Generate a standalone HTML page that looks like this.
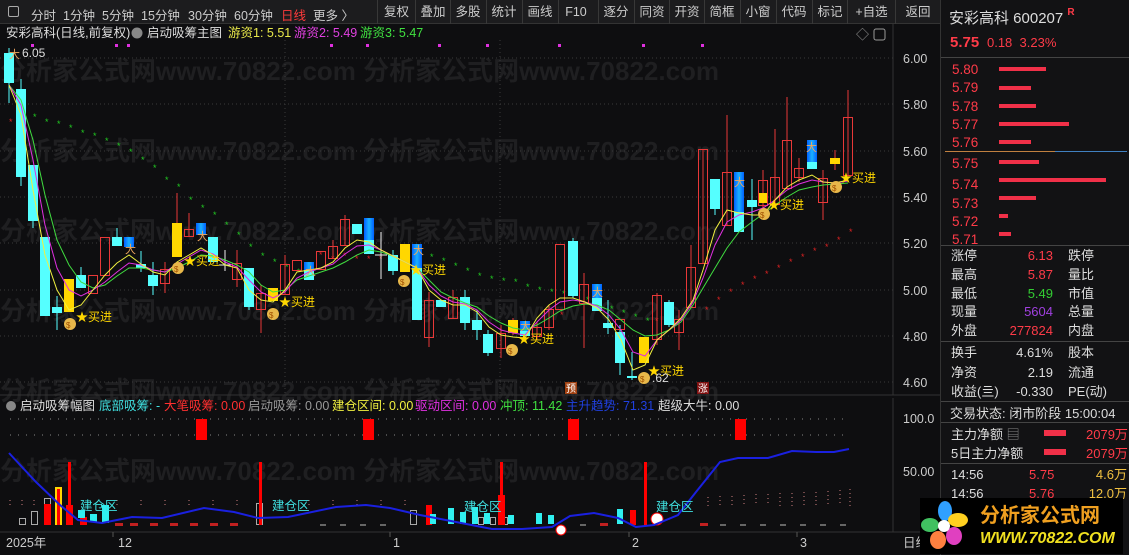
<!DOCTYPE html>
<html><head><meta charset="utf-8">
<style>
*{margin:0;padding:0;box-sizing:border-box}
body{width:1129px;height:555px;background:#0e0e10;overflow:hidden;font-family:"Liberation Sans","Noto Sans CJK SC",sans-serif;position:relative;color:#ddd}
.tb{position:absolute;left:0;top:0;width:940px;height:24px;background:#1c1c1e;border-bottom:1px solid #333;font-size:12.5px}
.tb span{position:absolute;top:5px;color:#ccc}
.tb .bt{top:0;height:24px;line-height:24px;border-left:1px solid #383838;text-align:center;width:35px}
.rp{position:absolute;left:940px;top:0;width:189px;height:555px;background:#121214;border-left:1px solid #333;font-size:13px}
.rp div{position:absolute;white-space:nowrap}
.r{color:#ff3b48}.w{color:#ddd}
</style></head><body>
<div class="tb">
<span style="left:8px;top:6px;width:11px;height:11px;border:1px solid #aaa;border-radius:2px"></span>
<span style="left:31px">分时</span><span style="left:63px">1分钟</span><span style="left:102px">5分钟</span><span style="left:141px">15分钟</span><span style="left:188px">30分钟</span><span style="left:234px">60分钟</span><span style="left:281px;color:#ff3b3b">日线</span><span style="left:313px">更多 〉</span>
<span class="bt" style="left:377px;width:38px">复权</span><span class="bt" style="left:415px">叠加</span><span class="bt" style="left:450px">多股</span><span class="bt" style="left:486px">统计</span><span class="bt" style="left:522px">画线</span><span class="bt" style="left:558px">F10</span><span class="bt" style="left:598px">逐分</span><span class="bt" style="left:634px">同资</span><span class="bt" style="left:669px">开资</span><span class="bt" style="left:704px">简框</span><span class="bt" style="left:740px">小窗</span><span class="bt" style="left:776px">代码</span><span class="bt" style="left:812px">标记</span><span class="bt" style="left:847px;width:48px">+自选</span><span class="bt" style="left:895px;width:45px">返回</span>
</div>
<svg width="940" height="555" style="position:absolute;left:0;top:0" font-family="Liberation Sans, Noto Sans CJK SC, sans-serif">
<g fill="#1f1f21" font-size="26" font-weight="bold">
<text x="0" y="80">分析家公式网www.70822.com   分析家公式网www.70822.com</text>
<text x="0" y="160">分析家公式网www.70822.com   分析家公式网www.70822.com</text>
<text x="0" y="240">分析家公式网www.70822.com   分析家公式网www.70822.com</text>
<text x="0" y="320">分析家公式网www.70822.com   分析家公式网www.70822.com</text>
<text x="0" y="400">分析家公式网www.70822.com   分析家公式网www.70822.com</text>
<text x="0" y="480">分析家公式网www.70822.com   分析家公式网www.70822.com</text>
</g>
<!-- header -->
<g font-size="12.5">
<text x="6" y="37" fill="#ddd">安彩高科(日线,前复权)</text>
<circle cx="137" cy="33" r="5.5" fill="#888"/>
<text x="147" y="37" fill="#ddd">启动吸筹主图</text>
<text x="228" y="37" fill="#e8e84a">游资1: 5.51</text>
<text x="294" y="37" fill="#e040e0">游资2: 5.49</text>
<text x="360" y="37" fill="#40e040">游资3: 5.47</text>
</g>
<text x="856" y="39" fill="#999" font-size="13">◇</text>
<rect x="874" y="29" width="11" height="11" fill="none" stroke="#999" rx="2"/>
<line x1="893" y1="24" x2="893" y2="395" stroke="#333"/>
<line x1="0" y1="395" x2="940" y2="395" stroke="#333"/>
<line x1="0" y1="532" x2="940" y2="532" stroke="#333"/>
<line x1="893" y1="398" x2="893" y2="532" stroke="#333"/>
<!-- grid -->
<g stroke="#3a3a3a" stroke-dasharray="1,3">
<line x1="0" y1="58" x2="893" y2="58"/><line x1="0" y1="104" x2="893" y2="104"/><line x1="0" y1="151" x2="893" y2="151"/><line x1="0" y1="197" x2="893" y2="197"/><line x1="0" y1="243" x2="893" y2="243"/><line x1="0" y1="290" x2="893" y2="290"/><line x1="0" y1="336" x2="893" y2="336"/><line x1="0" y1="382" x2="893" y2="382"/>
<line x1="285" y1="40" x2="285" y2="395"/><line x1="500" y1="40" x2="500" y2="395"/>
</g>
<g fill="#ccc" font-size="12.5">
<text x="903" y="63">6.00</text><text x="903" y="109">5.80</text><text x="903" y="156">5.60</text><text x="903" y="202">5.40</text><text x="903" y="248">5.20</text><text x="903" y="295">5.00</text><text x="903" y="341">4.80</text><text x="903" y="387">4.60</text>
<text x="903" y="423">100.0</text><text x="903" y="476">50.00</text>
</g>
<g fill="#e030e0"><rect x="31" y="44" width="3" height="3"/><rect x="115" y="44" width="3" height="3"/><rect x="127" y="44" width="3" height="3"/><rect x="330" y="44" width="3" height="3"/><rect x="366" y="44" width="3" height="3"/><rect x="438" y="44" width="3" height="3"/><rect x="486" y="44" width="3" height="3"/><rect x="558" y="44" width="3" height="3"/><rect x="642" y="44" width="3" height="3"/><rect x="701" y="44" width="3" height="3"/></g>
<g fill="#22cc22" font-size="9">
<text x="20" y="124">*</text><text x="33" y="120">*</text><text x="45" y="125">*</text><text x="57" y="127">*</text><text x="69" y="131">*</text><text x="81" y="136">*</text><text x="93" y="139">*</text><text x="105" y="144">*</text><text x="117" y="149">*</text><text x="129" y="155">*</text><text x="141" y="163">*</text><text x="153" y="171">*</text><text x="165" y="183">*</text><text x="177" y="190">*</text><text x="189" y="203">*</text><text x="201" y="211">*</text><text x="213" y="218">*</text><text x="225" y="228">*</text><text x="237" y="238">*</text><text x="249" y="250">*</text><text x="261" y="259">*</text><text x="273" y="265">*</text><text x="285" y="270">*</text><text x="297" y="275">*</text><text x="430" y="260">*</text><text x="442" y="264">*</text><text x="454" y="269">*</text><text x="466" y="274">*</text><text x="478" y="279">*</text><text x="490" y="282">*</text><text x="502" y="284">*</text><text x="514" y="285">*</text><text x="526" y="290">*</text><text x="538" y="293">*</text><text x="550" y="295">*</text><text x="562" y="297">*</text><text x="574" y="299">*</text><text x="586" y="303">*</text><text x="598" y="307">*</text><text x="610" y="312">*</text><text x="622" y="316">*</text><text x="634" y="320">*</text><text x="646" y="324">*</text><text x="668" y="322">*</text>
</g>
<g fill="#dd2222" font-size="9">
<text x="9" y="125">*</text><text x="319" y="258">*</text><text x="331" y="262">*</text><text x="343" y="259">*</text><text x="355" y="262">*</text><text x="367" y="262">*</text><text x="379" y="262">*</text><text x="560" y="318">*</text><text x="655" y="324">*</text><text x="705" y="313">*</text><text x="717" y="303">*</text><text x="729" y="295">*</text><text x="741" y="288">*</text><text x="753" y="282">*</text><text x="765" y="277">*</text><text x="777" y="271">*</text><text x="789" y="265">*</text><text x="801" y="260">*</text><text x="813" y="254">*</text><text x="825" y="250">*</text><text x="837" y="243">*</text><text x="849" y="235">*</text>
</g>
<g stroke-width="1">
<g stroke="#5ff"><line x1="9" y1="48" x2="9" y2="103"/><line x1="21" y1="79" x2="21" y2="186"/><line x1="33" y1="165" x2="33" y2="228"/><line x1="57" y1="296" x2="57" y2="330"/><line x1="81" y1="267" x2="81" y2="288"/><line x1="117" y1="228" x2="117" y2="246"/><line x1="141" y1="251" x2="141" y2="272"/><line x1="153" y1="262" x2="153" y2="295"/><line x1="249" y1="268" x2="249" y2="310"/><line x1="393" y1="250" x2="393" y2="275"/><line x1="465" y1="290" x2="465" y2="330"/><line x1="477" y1="310" x2="477" y2="340"/><line x1="488" y1="330" x2="488" y2="356"/><line x1="573" y1="238" x2="573" y2="298"/><line x1="608" y1="300" x2="608" y2="334"/><line x1="620" y1="325" x2="620" y2="375"/><line x1="632" y1="352" x2="632" y2="380"/><line x1="669" y1="300" x2="669" y2="327"/><line x1="715" y1="179" x2="715" y2="215"/><line x1="752" y1="179" x2="752" y2="240"/></g>
<g stroke="#e83838"><line x1="165" y1="262" x2="165" y2="293"/><line x1="177" y1="193" x2="177" y2="257"/><line x1="189" y1="213" x2="189" y2="236"/><line x1="237" y1="250" x2="237" y2="287"/><line x1="261" y1="285" x2="261" y2="333"/><line x1="285" y1="255" x2="285" y2="294"/><line x1="333" y1="240" x2="333" y2="258"/><line x1="345" y1="215" x2="345" y2="245"/><line x1="429" y1="292" x2="429" y2="347"/><line x1="453" y1="290" x2="453" y2="318"/><line x1="501" y1="325" x2="501" y2="358"/><line x1="513" y1="318" x2="513" y2="335"/><line x1="537" y1="322" x2="537" y2="340"/><line x1="549" y1="305" x2="549" y2="330"/><line x1="584" y1="273" x2="584" y2="348"/><line x1="657" y1="293" x2="657" y2="345"/><line x1="679" y1="310" x2="679" y2="350"/><line x1="691" y1="245" x2="691" y2="307"/><line x1="703" y1="149" x2="703" y2="263"/><line x1="727" y1="115" x2="727" y2="225"/><line x1="763" y1="170" x2="763" y2="208"/><line x1="775" y1="129" x2="775" y2="204"/><line x1="787" y1="97" x2="787" y2="188"/><line x1="799" y1="158" x2="799" y2="182"/><line x1="823" y1="170" x2="823" y2="220"/><line x1="835" y1="150" x2="835" y2="170"/><line x1="848" y1="90" x2="848" y2="175"/></g>
<g stroke="#eee"><line x1="225" y1="250" x2="225" y2="271"/><line x1="219" y1="265" x2="231" y2="265"/><line x1="381" y1="232" x2="381" y2="279"/><line x1="375" y1="255" x2="387" y2="255"/></g>
</g>
<defs><linearGradient id="bg" x1="0" y1="0" x2="1" y2="0"><stop offset="0" stop-color="#0060ff"/><stop offset="0.5" stop-color="#1ab0ff"/><stop offset="1" stop-color="#0060ff"/></linearGradient></defs>
<g fill="#55ffff">
<rect x="4" y="53" width="10" height="30"/><rect x="16" y="89" width="10" height="88"/><rect x="28" y="165" width="10" height="56"/><rect x="40" y="237" width="10" height="79"/><rect x="52" y="307" width="10" height="6"/><rect x="76" y="275" width="10" height="13"/><rect x="112" y="237" width="10" height="9"/><rect x="136" y="264" width="10" height="4"/><rect x="148" y="275" width="10" height="11"/><rect x="208" y="237" width="10" height="25"/><rect x="244" y="268" width="10" height="39"/><rect x="304" y="266" width="10" height="14"/><rect x="352" y="224" width="10" height="10"/><rect x="364" y="236" width="10" height="18"/><rect x="388" y="255" width="10" height="16"/><rect x="412" y="262" width="10" height="58"/><rect x="436" y="300" width="10" height="7"/><rect x="460" y="297" width="10" height="26"/><rect x="472" y="320" width="10" height="10"/><rect x="483" y="334" width="10" height="19"/><rect x="520" y="321" width="10" height="15"/><rect x="568" y="241" width="10" height="55"/><rect x="592" y="296" width="10" height="15"/><rect x="603" y="323" width="10" height="5"/><rect x="615" y="332" width="10" height="31"/><rect x="627" y="376" width="10" height="2"/><rect x="664" y="302" width="10" height="23"/><rect x="710" y="179" width="10" height="30"/><rect x="734" y="205" width="10" height="27"/><rect x="747" y="200" width="10" height="7"/><rect x="807" y="158" width="10" height="11"/>
</g>
<g fill="url(#bg)"><rect x="124" y="237" width="10" height="10"/><rect x="196" y="223" width="10" height="12"/><rect x="304" y="262" width="10" height="8"/><rect x="364" y="218" width="10" height="22"/><rect x="412" y="244" width="10" height="24"/><rect x="520" y="321" width="10" height="10"/><rect x="592" y="284" width="10" height="14"/><rect x="734" y="172" width="10" height="40"/><rect x="807" y="140" width="10" height="22"/></g>
<g fill="#ffd700"><rect x="64" y="279" width="10" height="33"/><rect x="172" y="223" width="10" height="34"/><rect x="268" y="288" width="10" height="13"/><rect x="400" y="244" width="10" height="28"/><rect x="508" y="320" width="10" height="13"/><rect x="639" y="337" width="10" height="26"/><rect x="758" y="193" width="10" height="10"/><rect x="830" y="158" width="10" height="6"/></g>
<g fill="none" stroke="#e83838"><rect x="88.5" y="275.5" width="9" height="18"/><rect x="100.5" y="237.5" width="9" height="38"/><rect x="160.5" y="269.5" width="9" height="14"/><rect x="184.5" y="229.5" width="9" height="7"/><rect x="232.5" y="263.5" width="9" height="16"/><rect x="256.5" y="293.5" width="9" height="16"/><rect x="280.5" y="264.5" width="9" height="30"/><rect x="292.5" y="260.5" width="9" height="10"/><rect x="316.5" y="251.5" width="9" height="18"/><rect x="328.5" y="246.5" width="9" height="12"/><rect x="340.5" y="219.5" width="9" height="26"/><rect x="424.5" y="300.5" width="9" height="37"/><rect x="448.5" y="297.5" width="9" height="21"/><rect x="496.5" y="333.5" width="9" height="15"/><rect x="532.5" y="327.5" width="9" height="9"/><rect x="544.5" y="309.5" width="9" height="18"/><rect x="555.5" y="244.5" width="9" height="65"/><rect x="579.5" y="284.5" width="9" height="19"/><rect x="615.5" y="319.5" width="9" height="10"/><rect x="652.5" y="295.5" width="9" height="44"/><rect x="674.5" y="319.5" width="9" height="13"/><rect x="686.5" y="267.5" width="9" height="40"/><rect x="698.5" y="149.5" width="9" height="114"/><rect x="722.5" y="172.5" width="9" height="53"/><rect x="758.5" y="180.5" width="9" height="25"/><rect x="770.5" y="177.5" width="9" height="27"/><rect x="782.5" y="140.5" width="9" height="48"/><rect x="794.5" y="168.5" width="9" height="9"/><rect x="818.5" y="178.5" width="9" height="24"/><rect x="843.5" y="117.5" width="9" height="58"/></g>
<polyline fill="none" stroke="#40dd40" stroke-width="1" points="9,85 21,100 33,140 45,195 57,240 69,265 81,282 93,288 105,285 117,276 129,268 141,268 153,270 165,272 177,268 189,262 201,255 213,256 225,260 237,265 249,272 261,285 273,292 285,290 297,280 309,276 321,272 333,268 345,262 357,255 369,250 381,252 393,256 405,262 417,268 429,280 441,292 453,298 465,303 477,307 489,316 501,323 513,328 525,330 537,325 549,318 560,311 573,306 585,304 597,305 609,310 621,320 633,330 645,336 657,335 669,330 681,322 693,305 703,288 715,268 727,248 739,232 752,222 763,214 775,205 787,197 799,190 812,187 823,185 835,184 848,183"/>
<polyline fill="none" stroke="#e030e0" stroke-width="1" points="9,85 21,105 33,160 45,225 57,268 69,290 81,296 93,290 105,282 117,272 129,263 141,265 153,270 165,272 177,264 189,257 201,250 213,254 225,262 237,267 249,280 261,292 273,298 285,292 297,278 309,272 321,268 333,264 345,254 357,246 369,245 381,250 393,256 405,262 417,268 429,285 441,296 453,302 465,304 477,310 489,322 501,330 513,333 525,335 537,322 549,310 560,302 573,300 585,302 597,306 609,315 621,330 633,352 645,356 657,340 669,330 681,320 693,302 703,278 715,245 727,222 739,215 752,212 763,208 775,200 787,190 799,184 812,180 823,182 835,183 848,181"/>
<polyline fill="none" stroke="#f0f040" stroke-width="1" points="9,85 21,115 33,190 45,255 57,290 69,310 81,305 93,290 105,275 117,263 129,255 141,264 153,272 165,275 177,262 189,255 201,248 213,255 225,265 237,268 249,290 261,300 273,302 285,290 297,272 309,270 321,268 333,262 345,248 357,240 369,242 381,250 393,256 405,262 417,268 429,290 441,300 453,305 465,305 477,312 489,327 501,335 513,337 525,338 537,318 549,305 560,298 573,298 585,302 597,308 609,320 621,340 633,370 645,365 657,340 669,330 681,318 693,300 703,270 715,230 727,210 739,213 752,215 763,215 775,200 787,187 799,180 812,175 823,182 835,183 848,180"/>
<g font-size="12" fill="#ffd700">
<g><circle cx="70" cy="324" r="6" fill="#e8b84a"/><text x="66" y="328" font-size="8" fill="#a05000">$</text><text x="76" y="321">★买进</text></g>
<g><circle cx="178" cy="268" r="6" fill="#e8b84a"/><text x="174" y="272" font-size="8" fill="#a05000">$</text><text x="184" y="265">★买进</text></g>
<g><circle cx="273" cy="314" r="6" fill="#e8b84a"/><text x="269" y="318" font-size="8" fill="#a05000">$</text><text x="279" y="306">★买进</text></g>
<g><circle cx="404" cy="281" r="6" fill="#e8b84a"/><text x="400" y="285" font-size="8" fill="#a05000">$</text><text x="410" y="274">★买进</text></g>
<g><circle cx="512" cy="350" r="6" fill="#e8b84a"/><text x="508" y="354" font-size="8" fill="#a05000">$</text><text x="518" y="343">★买进</text></g>
<g><circle cx="644" cy="378" r="6" fill="#e8b84a"/><text x="640" y="382" font-size="8" fill="#a05000">$</text><text x="648" y="375">★买进</text></g>
<g><circle cx="764" cy="214" r="6" fill="#e8b84a"/><text x="760" y="218" font-size="8" fill="#a05000">$</text><text x="768" y="209">★买进</text></g>
<g><circle cx="836" cy="187" r="6" fill="#e8b84a"/><text x="832" y="191" font-size="8" fill="#a05000">$</text><text x="840" y="182">★买进</text></g>
</g>
<g fill="#f0a860" font-size="11"><text x="9" y="58">大</text><text x="125" y="253">大</text><text x="197" y="240">大</text><text x="305" y="275">大</text><text x="413" y="254">大</text><text x="520" y="330">大</text><text x="592" y="296">大</text><text x="734" y="186">大</text><text x="806" y="151">大</text></g>
<text x="22" y="57" fill="#ddd" font-size="12">6.05</text>
<text x="652" y="382" fill="#ddd" font-size="12">.62</text>
<rect x="565" y="382" width="12" height="12" fill="#a04010"/><text x="566" y="392" fill="#fff" font-size="10">预</text>
<rect x="697" y="382" width="12" height="12" fill="#801010"/><text x="698" y="392" fill="#fff" font-size="10">涨</text>
<circle cx="11" cy="406" r="5" fill="#888"/>
<g font-size="12.5"><text x="20" y="410" fill="#ddd">启动吸筹幅图</text><text x="99" y="410" fill="#40e0e0">底部吸筹: -</text><text x="164" y="410" fill="#ff3030">大笔吸筹: 0.00</text><text x="248" y="410" fill="#999">启动吸筹: 0.00</text><text x="332" y="410" fill="#f0f040">建仓区间: 0.00</text><text x="415" y="410" fill="#e030e0">驱动区间: 0.00</text><text x="500" y="410" fill="#40e040">冲顶: 11.42</text><text x="566" y="410" fill="#2040e0">主升趋势: 71.31</text><text x="658" y="410" fill="#ddd">超级大牛: 0.00</text></g>
<g stroke="#888" stroke-dasharray="1,7"><line x1="10" y1="419" x2="850" y2="419"/><line x1="10" y1="435" x2="850" y2="435"/></g>
<g fill="#f00"><rect x="196" y="419" width="11" height="21"/><rect x="363" y="419" width="11" height="21"/><rect x="568" y="419" width="11" height="21"/><rect x="735" y="419" width="11" height="21"/></g>
<g stroke="#d08080" stroke-dasharray="1,3"><line x1="10" y1="500" x2="10" y2="506"/><line x1="22" y1="500" x2="22" y2="506"/><line x1="34" y1="500" x2="34" y2="506"/><line x1="117" y1="500" x2="117" y2="506"/><line x1="141" y1="500" x2="141" y2="506"/><line x1="165" y1="500" x2="165" y2="506"/><line x1="189" y1="500" x2="189" y2="506"/><line x1="213" y1="500" x2="213" y2="506"/><line x1="237" y1="500" x2="237" y2="506"/><line x1="309" y1="500" x2="309" y2="506"/><line x1="333" y1="500" x2="333" y2="506"/><line x1="357" y1="500" x2="357" y2="506"/><line x1="381" y1="500" x2="381" y2="506"/><line x1="405" y1="500" x2="405" y2="506"/><line x1="708" y1="497" x2="708" y2="506"/><line x1="720" y1="496" x2="720" y2="506"/><line x1="732" y1="496" x2="732" y2="506"/><line x1="744" y1="495" x2="744" y2="506"/><line x1="756" y1="494" x2="756" y2="506"/><line x1="768" y1="494" x2="768" y2="506"/><line x1="780" y1="493" x2="780" y2="506"/><line x1="792" y1="493" x2="792" y2="506"/><line x1="804" y1="492" x2="804" y2="506"/><line x1="816" y1="492" x2="816" y2="506"/><line x1="828" y1="491" x2="828" y2="506"/><line x1="840" y1="490" x2="840" y2="506"/><line x1="850" y1="489" x2="850" y2="506"/></g>
<g fill="none" stroke="#aaa"><rect x="19.5" y="518.5" width="6" height="6"/><rect x="31.5" y="511.5" width="6" height="13"/><rect x="44.5" y="498.5" width="6" height="6"/><rect x="256.5" y="503.5" width="6" height="21"/><rect x="410.5" y="510.5" width="6" height="14"/><rect x="478.5" y="517.5" width="5" height="7"/><rect x="490.5" y="517.5" width="5" height="7"/><rect x="502.5" y="517.5" width="5" height="7"/></g>
<g fill="#f00"><rect x="44" y="504" width="7" height="21"/><rect x="68" y="462" width="3" height="63"/><rect x="66" y="505" width="7" height="20"/><rect x="259" y="462" width="3" height="63"/><rect x="500" y="462" width="3" height="63"/><rect x="498" y="495" width="7" height="30"/><rect x="644" y="462" width="3" height="63"/><rect x="426" y="505" width="6" height="20"/><rect x="630" y="510" width="6" height="15"/><rect x="80" y="517" width="7" height="8"/></g>
<rect x="55" y="487" width="7" height="38" fill="#ffd700"/><rect x="57" y="489" width="3" height="36" fill="#f00"/>
<g fill="#30f0f0"><rect x="78" y="510" width="7" height="8"/><rect x="90" y="514" width="7" height="8"/><rect x="102" y="505" width="7" height="18"/><rect x="430" y="514" width="6" height="10"/><rect x="448" y="508" width="6" height="16"/><rect x="460" y="512" width="6" height="12"/><rect x="472" y="507" width="6" height="17"/><rect x="484" y="513" width="6" height="11"/><rect x="508" y="515" width="6" height="9"/><rect x="536" y="513" width="6" height="11"/><rect x="548" y="515" width="6" height="9"/><rect x="617" y="509" width="6" height="15"/></g>
<g fill="#c02020"><rect x="115" y="523" width="8" height="3"/><rect x="130" y="523" width="8" height="3"/><rect x="150" y="523" width="8" height="3"/><rect x="170" y="523" width="8" height="3"/><rect x="190" y="523" width="8" height="3"/><rect x="210" y="523" width="8" height="3"/><rect x="230" y="523" width="8" height="3"/><rect x="600" y="523" width="8" height="3"/><rect x="700" y="523" width="8" height="3"/></g>
<g fill="#666"><rect x="320" y="524" width="6" height="2"/><rect x="340" y="524" width="6" height="2"/><rect x="360" y="524" width="6" height="2"/><rect x="380" y="524" width="6" height="2"/><rect x="580" y="524" width="6" height="2"/><rect x="720" y="524" width="6" height="2"/><rect x="740" y="524" width="6" height="2"/><rect x="760" y="524" width="6" height="2"/><rect x="780" y="524" width="6" height="2"/><rect x="800" y="524" width="6" height="2"/><rect x="820" y="524" width="6" height="2"/><rect x="840" y="524" width="6" height="2"/></g>
<circle cx="561" cy="530" r="5" fill="#fff" stroke="#f00"/><circle cx="657" cy="519" r="6" fill="#fff" stroke="#f00"/>
<polyline fill="none" stroke="#1a20e0" stroke-width="2" points="9,453 36,482 60,505 78,520 102,523 132,517 162,518 204,508 234,512 258,518 288,517 336,507 366,505 390,508 420,515 456,522 492,529 522,529 552,527 570,516 594,513 618,518 636,527 654,525 678,515 696,492 720,462 738,458 768,458 792,451 816,452 834,452 849,449"/>
<g fill="#40e0e0" font-size="12.5"><text x="80" y="510">建仓区</text><text x="272" y="510">建仓区</text><text x="464" y="511">建仓区</text><text x="656" y="511">建仓区</text></g>
<g fill="#ccc" font-size="12.5"><text x="6" y="547">2025年</text><text x="118" y="547">12</text><text x="393" y="547">1</text><text x="632" y="547">2</text><text x="800" y="547">3</text><text x="903" y="547">日线</text></g>
<g stroke="#555"><line x1="113" y1="532" x2="113" y2="537"/><line x1="390" y1="532" x2="390" y2="537"/><line x1="629" y1="532" x2="629" y2="537"/><line x1="797" y1="532" x2="797" y2="537"/></g>
</svg>
<div class="rp">
<div style="left:8px;top:7px;font-size:15px;color:#ddd">安彩高科 600207 <span class="r" style="font-size:10px;font-weight:bold;vertical-align:top">R</span></div>
<div class="r" style="left:9px;top:34px;font-size:15px"><b>5.75</b> <span style="font-size:13px">&nbsp;0.18&nbsp; 3.23%</span></div>
<div style="left:0;top:57px;width:189px;height:1px;background:#444"></div>
<div class="r" style="left:11px;top:61px;line-height:18.3px;font-size:13.5px">5.80<br>5.79<br>5.78<br>5.77<br>5.76<br><span style="line-height:24px">5.75</span><br>5.74<br>5.73<br>5.72<br>5.71</div>
<div style="left:58px;top:67px;width:47px;height:4px;background:#f03048"></div>
<div style="left:58px;top:86px;width:32px;height:4px;background:#f03048"></div>
<div style="left:58px;top:104px;width:37px;height:4px;background:#f03048"></div>
<div style="left:58px;top:122px;width:70px;height:4px;background:#f03048"></div>
<div style="left:58px;top:140px;width:32px;height:4px;background:#f03048"></div>
<div style="left:4px;top:151px;width:110px;height:1px;background:#c08040"></div>
<div style="left:114px;top:151px;width:72px;height:1px;background:#4080c0"></div>
<div style="left:58px;top:160px;width:40px;height:4px;background:#f03048"></div>
<div style="left:58px;top:178px;width:107px;height:4px;background:#f03048"></div>
<div style="left:58px;top:196px;width:37px;height:4px;background:#f03048"></div>
<div style="left:58px;top:214px;width:9px;height:4px;background:#f03048"></div>
<div style="left:58px;top:232px;width:12px;height:4px;background:#f03048"></div>
<div style="left:0;top:245px;width:189px;height:1px;background:#444"></div>
<div class="w" style="left:10px;top:247px;line-height:18.8px">涨停<br>最高<br>最低<br>现量<br>外盘</div>
<div style="left:50px;top:247px;line-height:18.8px;width:62px;text-align:right"><span class="r">6.13</span><br><span class="r">5.87</span><br><span style="color:#3c3">5.49</span><br><span style="color:#a040e0">5604</span><br><span class="r">277824</span></div>
<div class="w" style="left:127px;top:247px;line-height:18.8px">跌停<br>量比<br>市值<br>总量<br>内盘</div>
<div style="left:0;top:341px;width:189px;height:1px;background:#444"></div>
<div class="w" style="left:10px;top:343px;line-height:19.5px">换手<br>净资<br>收益(亖)</div>
<div class="w" style="left:50px;top:343px;line-height:19.5px;width:62px;text-align:right">4.61%<br>2.19<br>-0.330</div>
<div class="w" style="left:127px;top:343px;line-height:19.5px">股本<br>流通<br>PE(动)</div>
<div style="left:0;top:401px;width:189px;height:1px;background:#444"></div>
<div class="w" style="left:9px;top:403px">交易状态: 闭市阶段 15:00:04</div>
<div style="left:0;top:422px;width:189px;height:1px;background:#444"></div>
<div class="w" style="left:10px;top:425px;line-height:19px">主力净额 <span style="color:#888">▤</span><br>5日主力净额</div>
<div style="left:103px;top:430px;width:22px;height:6px;background:#f03048"></div>
<div style="left:103px;top:449px;width:22px;height:6px;background:#f03048"></div>
<div class="r" style="left:145px;top:425px;line-height:19px">2079万<br>2079万</div>
<div style="left:0;top:463px;width:189px;height:1px;background:#444"></div>
<div class="w" style="left:10px;top:466px;line-height:18.5px">14:56<br>14:56</div>
<div class="r" style="left:88px;top:466px;line-height:18.5px">5.75<br>5.76</div>
<div style="left:132px;top:466px;line-height:18.5px;color:#f0c040;width:54px;text-align:right">4.6万<br>12.0万</div>
</div>
<div style="position:absolute;left:920px;top:498px;width:203px;height:56px;background:#000"></div>
<svg width="50" height="52" style="position:absolute;left:920px;top:500px">
<ellipse cx="25" cy="11" rx="7" ry="10" fill="#30a0ff"/><ellipse cx="38" cy="20" rx="10" ry="7" fill="#ffd020"/><ellipse cx="34" cy="36" rx="8" ry="9" fill="#e040c0"/><ellipse cx="18" cy="40" rx="8" ry="9" fill="#ff8040"/><ellipse cx="10" cy="25" rx="9" ry="7" fill="#40c060"/><circle cx="24" cy="26" r="6" fill="#fff"/>
</svg>
<div style="position:absolute;left:980px;top:502px;font-size:20px;font-weight:bold;color:#f0a020;font-family:'Noto Sans CJK SC',sans-serif;line-height:24px">分析家公式网</div>
<div style="position:absolute;left:980px;top:530px;font-size:16px;font-weight:bold;font-style:italic;color:#f0e020;line-height:18px">WWW.70822.COM</div>
</body></html>
